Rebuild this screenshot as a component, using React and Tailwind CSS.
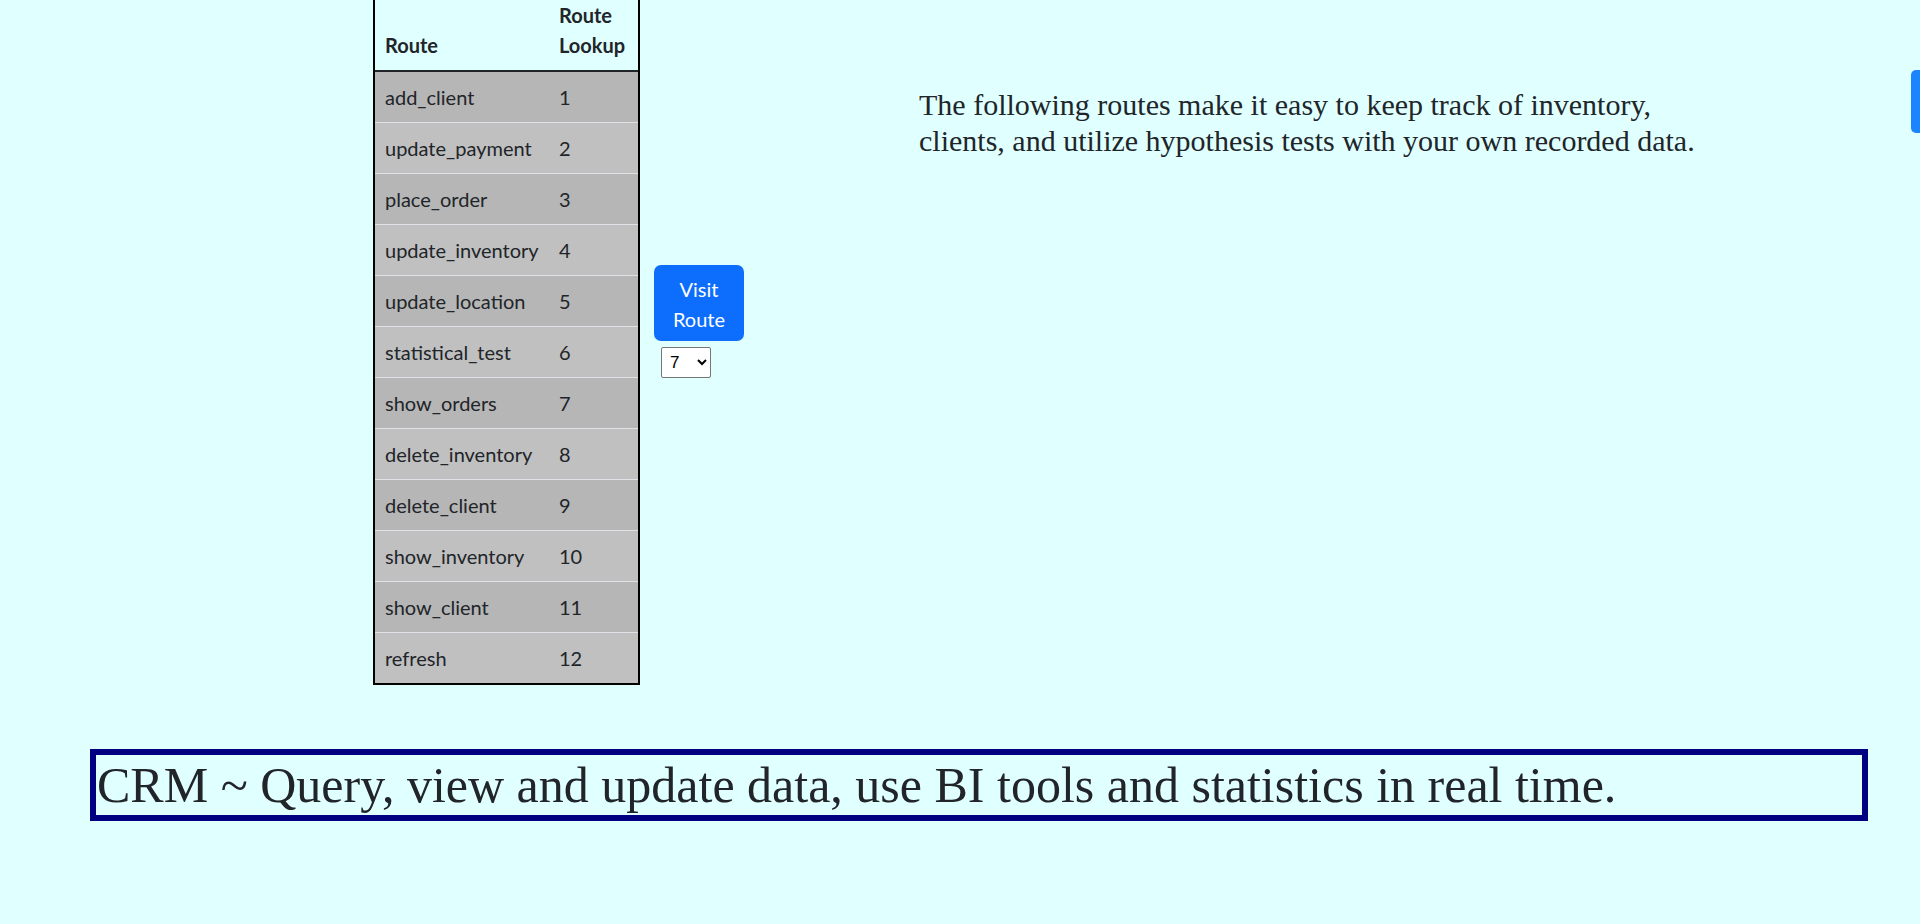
import { useState } from 'react';

const routes = [
  'add_client',
  'update_payment',
  'place_order',
  'update_inventory',
  'update_location',
  'statistical_test',
  'show_orders',
  'delete_inventory',
  'delete_client',
  'show_inventory',
  'show_client',
  'refresh',
];

const RouteTable = () => (
  <div className="w-[267px] border-2 border-black font-['Lato',sans-serif] text-[20px] leading-[30px] text-[#212529]">
    {/* header */}
    <div className="grid grid-cols-[174px_89px] border-b-2 border-[#212529] font-bold">
      <div className="flex items-end px-[10px] py-[10px]">Route</div>
      <div className="px-[10px] py-[10px]">Route Lookup</div>
    </div>
    {routes.map((name, i) => (
      <div
        key={name}
        className={`grid grid-cols-[174px_89px] ${i < routes.length - 1 ? 'border-b border-[#dee2e6]' : ''} ${i % 2 === 0 ? 'bg-[#b6b6b6]' : 'bg-[#c0c0c0]'}`}
      >
        <div className="px-[10px] py-[10px]">{name}</div>
        <div className="px-[10px] py-[10px]">{i + 1}</div>
      </div>
    ))}
  </div>
);

export default function App() {
  const [route, setRoute] = useState('7');

  return (
    <div className="relative min-h-[924px] overflow-hidden bg-[#e0ffff] text-[#212529]">
      <div className="flex items-start pl-[373px] -mt-[12px]">
        <RouteTable />

        {/* visit route controls */}
        <div className="ml-[14px] mt-[277px] flex flex-col items-start">
          <button className="w-[90px] rounded-[7px] bg-[#0d6efd] pt-[9px] pb-[7px] font-['Lato',sans-serif] text-[20px] leading-[30px] text-white">
            Visit
            <br />
            Route
          </button>
          <select
            value={route}
            onChange={(e) => setRoute(e.target.value)}
            className="ml-[7px] mt-[6px] h-[31px] w-[50px] rounded-[2px] border border-[#767676] bg-white pl-[4px] font-['Liberation_Sans',sans-serif] text-[17px] text-black"
          >
            {routes.map((_, i) => (
              <option key={i} value={String(i + 1)}>
                {i + 1}
              </option>
            ))}
          </select>
        </div>

        <p className="ml-[175px] mt-[99px] w-[790px] font-['Liberation_Serif',serif] text-[30px] leading-[36px]">
          The following routes make it easy to keep track of inventory, clients, and utilize hypothesis tests with your own recorded data.
        </p>
      </div>

      <div className="ml-[90px] mt-[64px] w-[1778px] border-[6px] border-[#000080] px-[1px]">
        <h1 className="font-['Liberation_Serif',serif] text-[50px] leading-[60px]">
          CRM ~ Query, view and update data, use BI tools and statistics in real time.
        </h1>
      </div>

      {/* side tab */}
      <div className="absolute right-0 top-[70px] h-[63px] w-[9px] rounded-l-[5px] bg-[#1a85ff]" />
    </div>
  );
}
